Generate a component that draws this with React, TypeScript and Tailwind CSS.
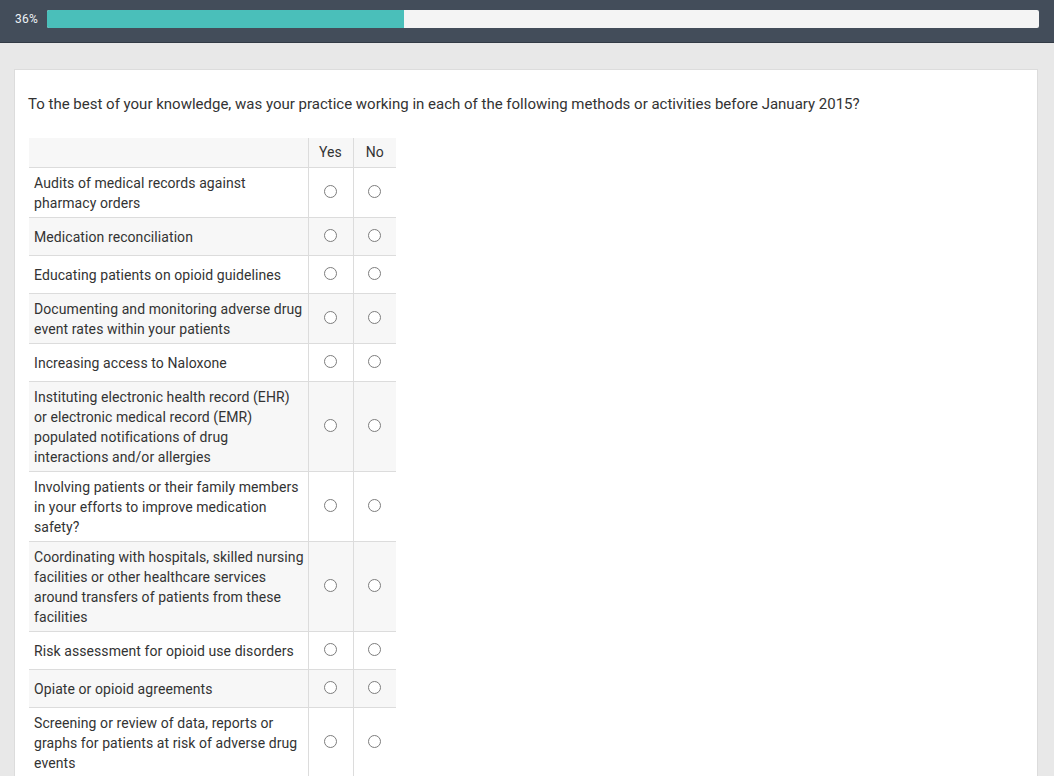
import React from "react";

const rows: string[][] = [
  ["Audits of medical records against", "pharmacy orders"],
  ["Medication reconciliation"],
  ["Educating patients on opioid guidelines"],
  ["Documenting and monitoring adverse drug", "event rates within your patients"],
  ["Increasing access to Naloxone"],
  [
    "Instituting electronic health record (EHR)",
    "or electronic medical record (EMR)",
    "populated notifications of drug",
    "interactions and/or allergies",
  ],
  ["Involving patients or their family members", "in your efforts to improve medication", "safety?"],
  [
    "Coordinating with hospitals, skilled nursing",
    "facilities or other healthcare services",
    "around transfers of patients from these",
    "facilities",
  ],
  ["Risk assessment for opioid use disorders"],
  ["Opiate or opioid agreements"],
  ["Screening or review of data, reports or", "graphs for patients at risk of adverse drug", "events"],
];

function Radio() {
  return (
    <span className="inline-block w-[13px] h-[13px] rounded-full border border-[#7d7d7d] bg-white align-middle" />
  );
}

export default function App() {
  return (
    <div
      className="min-h-[776px] bg-[#e8e8e8] text-[#333] overflow-hidden"
      style={{ fontFamily: "Roboto, 'Liberation Sans', sans-serif" }}
    >
      <div className="h-[43px] bg-[#434d5a] border-b border-[#323a45] flex items-start pt-[10px] pl-[15px] pr-[15px]">
        <span className="text-[12px] leading-[18px] text-[#eef2f6] w-[32px] tracking-[0.2px]">36%</span>
        <div className="flex-1 h-[18px] bg-[#f4f4f4] rounded-[2px] overflow-hidden">
          <div className="h-full bg-[#4abfba] w-[36%]" />
        </div>
      </div>
      <div className="pt-[26px] pl-[14px] pr-[16px]">
        <div className="bg-white border-l border-t border-r border-[#dcdcdc] pl-[13px] pt-[24px] pb-[40px]">
          <p className="text-[15px] leading-[20px]">
            To the best of your knowledge, was your practice working in each of the following methods or activities before January 2015?
          </p>
          <table className="mt-[24px] ml-[1px] border-collapse text-[14px] leading-[20px] tracking-[0.08px]">
            <thead>
              <tr className="bg-[#f7f7f7] h-[29px]">
                <th className="w-[279px] p-0" />
                <th className="w-[45px] border-l border-[#dcdcdc] font-normal text-center p-0 align-middle">Yes</th>
                <th className="w-[43px] border-l border-[#dcdcdc] font-normal text-center p-0 align-middle">No</th>
              </tr>
            </thead>
            <tbody>
              {rows.map((r, i) => (
                <tr
                  key={i}
                  className={
                    (i % 2 === 1 ? "bg-[#f7f7f7] " : "bg-white ") + "border-t border-[#dcdcdc] h-[38px]"
                  }
                >
                  <td className="w-[279px] pl-[5px] pr-[2px] pt-[5px] pb-[4px] align-middle whitespace-nowrap">
                    {r.map((line, j) => (
                      <React.Fragment key={j}>
                        {j > 0 && <br />}
                        {line}
                      </React.Fragment>
                    ))}
                  </td>
                  <td className="border-l border-[#dcdcdc] text-center align-middle p-0 pb-[3px]">
                    <Radio />
                  </td>
                  <td className="border-l border-[#dcdcdc] text-center align-middle p-0 pb-[3px]">
                    <Radio />
                  </td>
                </tr>
              ))}
            </tbody>
          </table>
        </div>
      </div>
    </div>
  );
}
